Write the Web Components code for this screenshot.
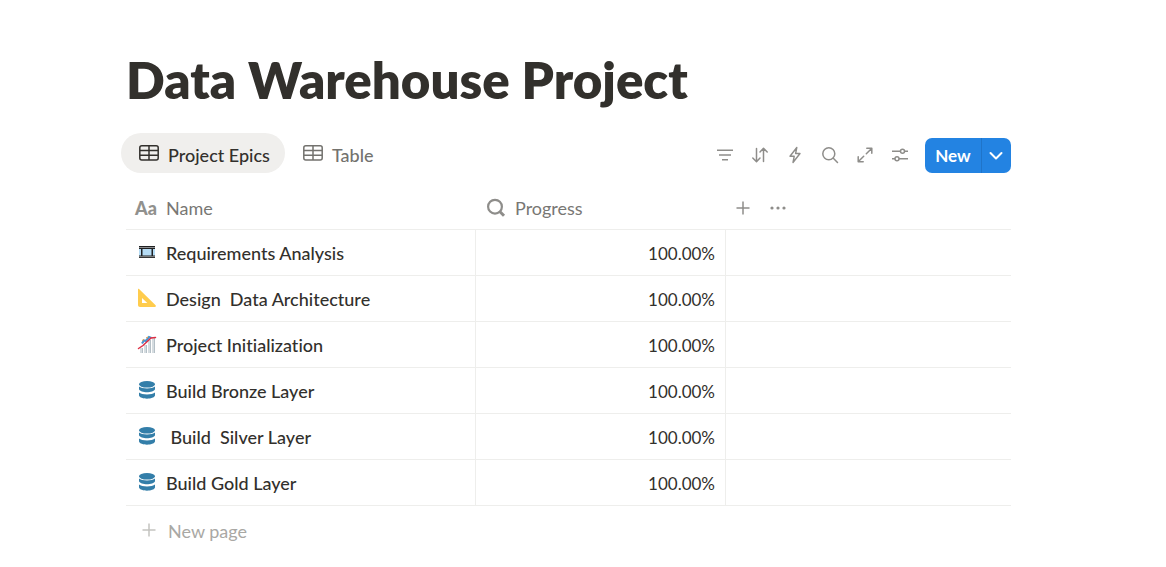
<!DOCTYPE html>
<html lang="en">
<head>
<meta charset="utf-8">
<title>Data Warehouse Project</title>
<style>
  body { margin: 0; background: #fff; color: #32302c; font: 18px/24px Lato, "Open Sans", sans-serif; font-variant-ligatures: none; }
</style>
</head>
<body>
<project-page>
  <span slot="title">Data Warehouse Project</span>
  <view-bar slot="views">
    <view-tab current>Project Epics</view-tab>
    <view-tab>Table</view-tab>
  </view-bar>
  <epic-table></epic-table>
</project-page>

<script>
const ICONS = {
  table: '<svg width="20" height="16" viewBox="0 0 20 16" fill="none" stroke="currentColor" stroke-width="1.5"><rect x=".8" y=".8" width="18.4" height="14.2" rx="2"/><path d="M1 5.5h18M1 10.3h18M10 1v14"/></svg>',
  filter: '<svg width="18" height="18" viewBox="0 0 18 18" fill="none" stroke="currentColor" stroke-width="1.5"><path d="M1 4.200h16M3 9h12M6 13.800h6"/></svg>',
  sort: '<svg width="18" height="18" viewBox="0 0 18 18" fill="none" stroke="currentColor" stroke-width="1.5" stroke-linecap="round" stroke-linejoin="round"><path d="M5.500 2.500v13M1.800 12l3.700 3.700L9 12M12.500 15.500v-13M9 6l3.500-3.700L16.200 6"/></svg>',
  bolt: '<svg width="18" height="18" viewBox="0 0 18 18" fill="none" stroke="currentColor" stroke-width="1.400" stroke-linejoin="round"><path d="M10.800 1.500 4 10.300h4.200L7 16.500l7-9H9.600z"/></svg>',
  search: '<svg width="18" height="18" viewBox="0 0 18 18" fill="none" stroke="currentColor" stroke-width="1.500" stroke-linecap="round"><circle cx="7.800" cy="7.800" r="6"/><path d="m12.300 12.300 4.200 4.200"/></svg>',
  expand: '<svg width="18" height="18" viewBox="0 0 18 18" fill="none" stroke="currentColor" stroke-width="1.500" stroke-linecap="round" stroke-linejoin="round"><path d="M10.800 2.200h5v5M15.800 2.200l-5.500 5.500M7.200 15.800h-5v-5M2.200 15.800l5.500-5.500"/></svg>',
  settings: '<svg width="18" height="18" viewBox="0 0 18 18" fill="none" stroke="currentColor" stroke-width="1.500"><path d="M1 5.300h8.500M13.500 5.300H17M1 12.700h3M8 12.700h9"/><circle cx="11.500" cy="5.300" r="2"/><circle cx="6" cy="12.700" r="2"/></svg>',
  chevron: '<svg width="14" height="10" viewBox="0 0 14 10" fill="none" stroke="currentColor" stroke-width="2" stroke-linecap="round" stroke-linejoin="round"><path d="m1.500 2 5.500 5.500L12.500 2"/></svg>',
  plus: '<svg width="14" height="14" viewBox="0 0 14 14" fill="none" stroke="currentColor" stroke-width="1.500"><path d="M7 .5v13M.5 7h13"/></svg>',
  dots: '<svg width="16" height="14" viewBox="0 0 16 14" fill="currentColor"><circle cx="2" cy="7" r="1.600"/><circle cx="8" cy="7" r="1.600"/><circle cx="14" cy="7" r="1.600"/></svg>',
  lookup: '<svg width="20" height="20" viewBox="0 0 20 20" fill="none" stroke="currentColor"><circle cx="9" cy="8.700" r="6.900" stroke-width="2.200"/><path d="m14 13.700 4 4" stroke-width="3"/></svg>',
  film: '<svg width="20" height="20" viewBox="0 0 20 20"><path fill="#1f2022" d="M2 4h16v12H2z"/><path fill="#b5dcf5" d="M2 7h2v6.500H2zM5.500 7h9v6.500h-9zM16 7h2v6.500h-2z"/><path stroke="#fff" stroke-width="1" stroke-dasharray="1 1" d="M2.500 5.500h15M2.500 14.700h15"/></svg>',
  ruler: '<svg width="20" height="20" viewBox="0 0 20 20"><path fill="#ffcc4d" fill-rule="evenodd" d="M1 1.500c0-.8.800-.8 1.300-.3L18.600 17.300c.6.700.2 1.700-.6 1.700H3c-1.200 0-2-.8-2-2zM5 10v5h5.300z"/></svg>',
  chart: '<svg width="20" height="20" viewBox="0 0 20 20"><path fill="#d5dce0" d="M3 14h3v5H3zM7 11h3v8H7zM11 6h3v13h-3zM15 4h3v15h-3z"/><path fill="#b4bfc6" d="M5 14h1v5H5zM9 11h1v8H9zM13 6h1v13h-1zM17 4h1v15h-1z"/><path fill="none" stroke="#4b94cf" stroke-width="2.200" d="M5 9.500 7 6.500 9 7l3-4 2.500 1"/><path fill="none" stroke="#e59b3d" d="m5 6.500 2-1M9 4l2-1"/><path fill="none" stroke="#dd2e44" stroke-width="1.500" stroke-linecap="round" d="M1.500 14.500 6 11.500 14 4l4.500-.5"/></svg>',
  database: '<svg width="20" height="20" viewBox="0 0 20 20" fill="#337ea9"><ellipse cx="10" cy="4.300" rx="8" ry="3.300"/><path d="M2 6.600c2.500 2.500 13.500 2.500 16 0v2.600c-1.500 4-14.500 4-16 0zM2 12.600c2.500 2.500 13.500 2.500 16 0v3c-1.500 4.200-14.500 4.200-16 0z"/></svg>'
};
const RESET = `
  *, *::before { box-sizing: border-box; }
  button { margin: 0; padding: 0; border: 0; background: none; color: inherit; font: inherit; cursor: pointer; }
  a { color: inherit; text-decoration: none; }
  svg { display: block; flex: none; }`;

function define(name, css, html) {
  customElements.define(name, class extends HTMLElement {
    constructor() {
      super();
      const root = this.attachShadow({ mode: 'open' });
      const template = document.createElement('template');
      template.innerHTML = `<style>${RESET}${css}</style>${typeof html === 'function' ? html(this) : html}`;
      root.append(template.content.cloneNode(true));
    }
  });
}

define('project-page', `
  :host { display: block; }
  main { padding: 50px 155px 0 126px; }
  h1 { margin: 0 0 23px; font-size: 51px; line-height: 60px; font-weight: 800; white-space: nowrap; }`,
  `<main><h1><slot name="title"></slot></h1><slot name="views"></slot><slot></slot></main>`);

define('view-tab', `
  :host { display: block; color: #73726e; }
  :host([current]) { color: #32302c; background: #f0efed; border-radius: 20px; }
  button { display: flex; align-items: center; gap: 9px; height: 40px; padding: 0 15px 0 18px; font-weight: 500; white-space: nowrap; }
  span { padding-top: 4px; }`,
  `<button type="button">${ICONS.table}<span><slot></slot></span></button>`);

define('tool-button', `
  :host { display: block; color: #8e8d8a; }
  button { display: flex; align-items: center; justify-content: center; width: 35px; height: 35px; padding: 0 1px 1px 0; }`,
  el => `<button type="button" aria-label="${el.getAttribute('label')}">${ICONS[el.getAttribute('icon')]}</button>`);

define('new-button', `
  :host { display: flex; margin-left: 7px; border-radius: 7px; overflow: hidden; background: #2383e2; color: #fff; font-size: 17px; font-weight: 700; }
  button { height: 35px; display: flex; align-items: center; justify-content: center; }
  .new { width: 56px; }
  .more { width: 30px; padding-right: 1px; border-left: 1px solid #1f74c9; }`,
  `<button class="new" type="button">New</button><button class="more" type="button" aria-label="More templates">${ICONS.chevron}</button>`);

define('view-bar', `
  :host { display: flex; align-items: center; justify-content: space-between; margin-left: -5px; }
  div { display: flex; }
  .tools { padding-top: 5px; }`,
  `<div><slot></slot></div>
   <div class="tools">
     <tool-button icon="filter" label="Filter"></tool-button>
     <tool-button icon="sort" label="Sort"></tool-button>
     <tool-button icon="bolt" label="Automations"></tool-button>
     <tool-button icon="search" label="Search"></tool-button>
     <tool-button icon="expand" label="Open full page"></tool-button>
     <tool-button icon="settings" label="Settings"></tool-button>
     <new-button></new-button>
   </div>`);

const EPICS = [
  ['film', 'Requirements Analysis'],
  ['ruler', 'Design  Data Architecture'],
  ['chart', 'Project Initialization'],
  ['database', 'Build Bronze Layer'],
  ['database', ' Build  Silver Layer'],
  ['database', 'Build Gold Layer']
];

define('epic-table', `
  :host { display: block; padding-top: 14px; }
  table { width: 100%; table-layout: fixed; border-collapse: separate; border-spacing: 0; }
  .name { width: 350px; }
  .progress { width: 250px; }
  th, td { padding: 0; border-bottom: 1px solid #eeeeec; text-align: left; }
  th { height: 43px; font-weight: 400; color: #787774; }
  td { height: 46px; padding-bottom: 2px; }
  td:not(:last-child) { border-right: 1px solid #eeeeec; }
  .label, .actions, .epic { display: flex; align-items: center; white-space: pre; }
  .label { gap: 9px; padding-left: 9px; }
  .progress .label { padding-left: 10px; }
  .label b { font-weight: 900; color: #91918e; width: 22px; }
  .label svg, .actions { color: #8e8d8a; }
  .actions { gap: 20px; padding-left: 10px; }
  .epic { gap: 9px; padding-left: 11px; font-weight: 500; }
  .epic span { padding-top: 3px; }
  td.value { padding: 2px 10px 0 0; font-size: 17px; text-align: right; }
  .add { display: flex; align-items: center; gap: 12px; height: 48px; padding-left: 16px; color: #a9a8a4; }
  .add svg { color: #c4c3c0; }
  .add span { padding-top: 2px; }`,
  `<table>
    <thead><tr>
      <th class="name" scope="col"><span class="label"><b aria-hidden="true">Aa</b>Name</span></th>
      <th class="progress" scope="col"><span class="label">${ICONS.lookup}Progress</span></th>
      <th><span class="actions"><button type="button" aria-label="Add property">${ICONS.plus}</button><button type="button" aria-label="More">${ICONS.dots}</button></span></th>
    </tr></thead>
    <tbody>${EPICS.map(([icon, name]) => `<tr>
      <td><a class="epic" href="#">${ICONS[icon]}<span>${name}</span></a></td>
      <td class="value">100.00%</td><td></td>
    </tr>`).join('')}</tbody>
  </table>
  <button class="add" type="button">${ICONS.plus}<span>New page</span></button>`);
</script>
</body>
</html>
